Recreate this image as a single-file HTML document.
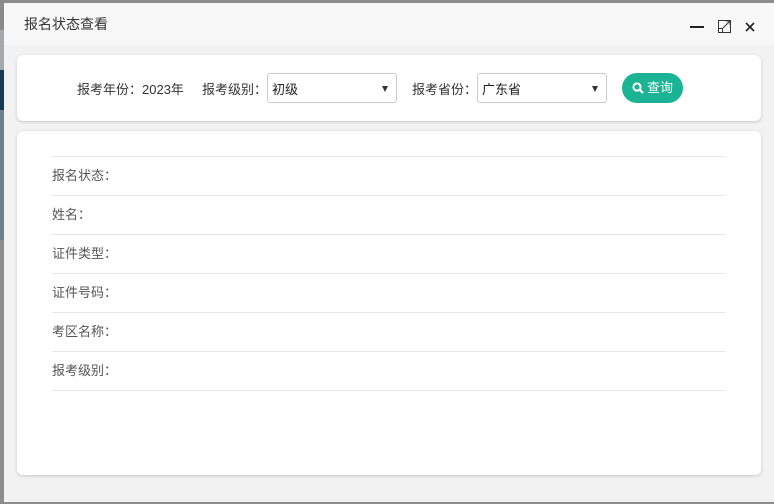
<!DOCTYPE html>
<html><head><meta charset="utf-8"><style>
*{margin:0;padding:0;box-sizing:border-box}
body{width:774px;height:504px;overflow:hidden;background:#8d8d8d;font-family:"Liberation Sans","Noto Sans CJK SC",sans-serif;position:relative;color:#333}
.strip{position:absolute;left:0;width:4px}
.dlg{position:absolute;left:4px;top:3px;width:770px;height:499px;background:#f2f2f2}
.title{position:absolute;left:0;top:0;width:770px;height:42px;background:#f8f8f8;font-size:14px;line-height:42px;padding-left:20px;color:#333}
.card{position:absolute;left:13px;width:744px;background:#fff;border-radius:6px;box-shadow:0 1px 3px rgba(0,0,0,.18)}
.lbl{position:absolute;font-size:13px;color:#333;top:0}
.sel{position:absolute;top:18px;height:30px;border:1px solid #ccc;border-radius:3px;background:#fff;font-size:13px;line-height:32px;padding-left:4px;color:#222}
.sel:after{content:"";position:absolute;right:8px;top:12px;border-left:3px solid transparent;border-right:3px solid transparent;border-top:6px solid #333}
.btn{position:absolute;left:605px;top:18px;width:61px;height:30px;border-radius:15px;background:#1ab394;color:#fff;font-size:13px;line-height:30px}
.row{position:absolute;left:35px;width:674px;border-top:1px solid #e7e7e7;height:39px;font-size:13px;color:#555;line-height:38px}
</style></head><body>
<div class="strip" style="top:0;height:30px;background:#8a8a8a"></div>
<div class="strip" style="top:30px;height:40px;background:#a5a9ad"></div>
<div class="strip" style="top:70px;height:40px;background:#163a5a"></div>
<div class="strip" style="top:110px;height:130px;background:#6e7e8b"></div>
<div class="dlg">
 <div class="title">报名状态查看</div>
 <svg style="position:absolute;left:686px;top:15px" width="70" height="16" viewBox="0 0 70 16">
  <path d="M0 9H14" stroke="#222" stroke-width="2"/>
  <path d="M28.5 2.5h12v12h-12z" fill="none" stroke="#333" stroke-width="1"/>
  <path d="M28.5 10.5h4v4h-4z" fill="none" stroke="#333" stroke-width="1"/>
  <path d="M33 10L40 3M36 3h4v4" fill="none" stroke="#333" stroke-width="1"/>
  <path d="M56 5l8 8M64 5l-8 8" stroke="#222" stroke-width="1.6"/>
 </svg>
 <div class="card" style="top:52px;height:66px">
  <div class="lbl" style="left:60px;top:24px">报考年份：2023年</div>
  <div class="lbl" style="left:185px;top:24px">报考级别：</div>
  <div class="sel" style="left:250px;width:130px">初级</div>
  <div class="lbl" style="left:395px;top:24px">报考省份：</div>
  <div class="sel" style="left:460px;width:130px">广东省</div>
  <div class="btn"><svg style="position:absolute;left:10px;top:9px" width="12" height="12" viewBox="0 0 12 12"><circle cx="5" cy="5" r="3.6" fill="none" stroke="#fff" stroke-width="2"/><path d="M7.6 7.6L11 11" stroke="#fff" stroke-width="2.2"/></svg><span style="position:absolute;left:25px">查询</span></div>
 </div>
 <div class="card" style="top:128px;height:344px">
  <div class="row" style="top:25px">报名状态：</div>
  <div class="row" style="top:64px">姓名：</div>
  <div class="row" style="top:103px">证件类型：</div>
  <div class="row" style="top:142px">证件号码：</div>
  <div class="row" style="top:181px">考区名称：</div>
  <div class="row" style="top:220px">报考级别：</div>
  <div class="row" style="top:259px;height:1px"></div>
 </div>
</div>
</body></html>
